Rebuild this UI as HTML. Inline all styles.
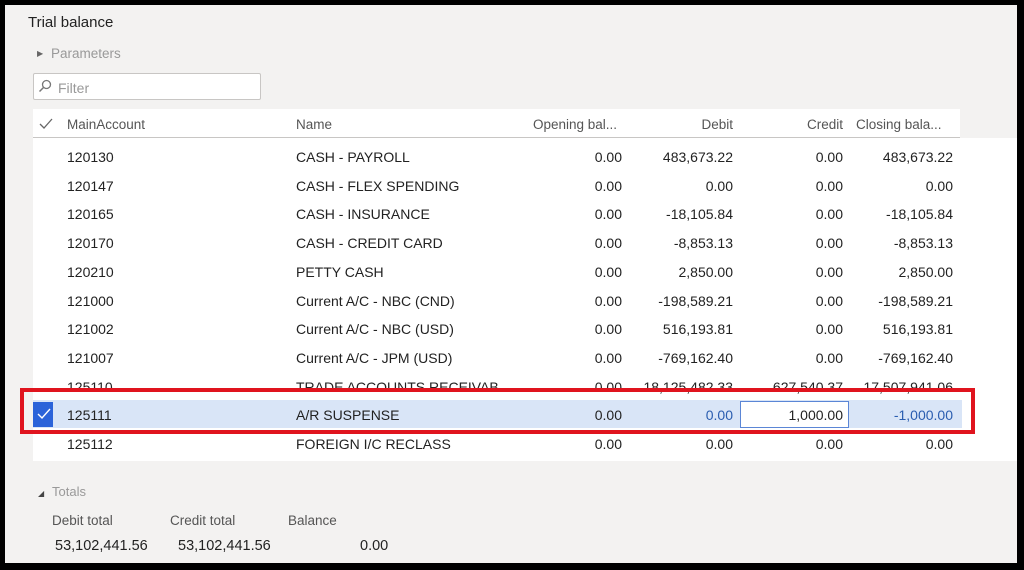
<!DOCTYPE html>
<html><head><style>
body{margin:0;width:1024px;height:570px;background:#000;position:relative;overflow:hidden;font-family:"Liberation Sans",sans-serif;font-size:14px;color:#222}
#pg{position:absolute;left:5px;top:5px;width:1012px;height:558px;background:#f3f2f1}
.a{position:absolute;white-space:nowrap}
.r{text-align:right}
#grid{position:absolute;left:33px;top:138px;width:984px;height:323px;background:#fff}
.hd{color:#555;font-size:13.5px}
</style></head><body>
<div id="pg"></div>
<div class="a" style="left:28px;top:14px;font-size:15px;color:#222">Trial balance</div>
<div class="a" style="left:37px;top:49px;font-size:8px;color:#666">&#9654;</div>
<div class="a" style="left:51px;top:46px;font-size:13.5px;color:#999">Parameters</div>
<div class="a" style="left:33px;top:73px;width:226px;height:25px;border:1px solid #c8c6c4;background:#fff;border-radius:2px"></div>
<svg class="a" style="left:38px;top:79px" width="14" height="14"><circle cx="8.5" cy="5.5" r="4" fill="none" stroke="#777" stroke-width="1.3"/><line x1="5.5" y1="8.5" x2="1.5" y2="12.5" stroke="#777" stroke-width="1.5"/></svg>
<div class="a" style="left:58px;top:80px;font-size:14px;color:#999">Filter</div>
<div class="a" style="left:33px;top:109px;width:927px;height:29px;background:#fff"></div>
<div id="grid"></div>
<div class="a" style="left:33px;top:137px;width:927px;height:1px;background:#c8c6c4"></div>
<svg class="a" style="left:39px;top:118px" width="14" height="12"><path d="M1 6 L5 10 L13 1" fill="none" stroke="#666" stroke-width="1.3"/></svg>
<div class="a hd" style="left:67px;top:117px">MainAccount</div>
<div class="a hd" style="left:296px;top:117px">Name</div>
<div class="a hd r" style="left:500px;width:117px;top:117px">Opening bal...</div>
<div class="a hd r" style="left:640px;width:93px;top:117px">Debit</div>
<div class="a hd r" style="left:750px;width:93px;top:117px">Credit</div>
<div class="a hd" style="left:856px;top:117px">Closing bala...</div>
<div class="a" style="left:33px;top:400px;width:929px;height:28px;background:#d9e5f7"></div>
<div class="a" style="left:33px;top:402px;width:20px;height:25px;background:#2b63d9"></div>
<svg class="a" style="left:37px;top:408px" width="14" height="12"><path d="M1 6 L5 10 L13 1" fill="none" stroke="#fff" stroke-width="1.4"/></svg>
<div class="a" style="left:740px;top:401px;width:107px;height:25px;border:1px solid #5b86d6;background:#fff"></div>
<div id="rows"></div>
<div class="a" style="left:20px;top:388px;width:947px;height:38px;border:4px solid #e0141e"></div>
<div class="a" style="left:38px;top:489px;font-size:8px;color:#444">&#9698;</div>
<div class="a" style="left:52px;top:484px;font-size:13px;color:#999">Totals</div>
<div class="a" style="left:52px;top:513px;font-size:13.5px;color:#555">Debit total</div>
<div class="a" style="left:170px;top:513px;font-size:13.5px;color:#555">Credit total</div>
<div class="a" style="left:288px;top:513px;font-size:13.5px;color:#555">Balance</div>
<div class="a" style="left:55px;top:538px;font-size:14.5px">53,102,441.56</div>
<div class="a" style="left:178px;top:538px;font-size:14.5px">53,102,441.56</div>
<div class="a" style="left:360px;top:538px;font-size:14.5px">0.00</div>
<script>
var d=[["120130","CASH - PAYROLL","0.00","483,673.22","0.00","483,673.22"],
["120147","CASH - FLEX SPENDING","0.00","0.00","0.00","0.00"],
["120165","CASH - INSURANCE","0.00","-18,105.84","0.00","-18,105.84"],
["120170","CASH - CREDIT CARD","0.00","-8,853.13","0.00","-8,853.13"],
["120210","PETTY CASH","0.00","2,850.00","0.00","2,850.00"],
["121000","Current A/C - NBC (CND)","0.00","-198,589.21","0.00","-198,589.21"],
["121002","Current A/C - NBC (USD)","0.00","516,193.81","0.00","516,193.81"],
["121007","Current A/C - JPM (USD)","0.00","-769,162.40","0.00","-769,162.40"],
["125110","TRADE ACCOUNTS RECEIVAB","0.00","18,125,482.33","627,540.37","17,507,941.06"],
["125111","A/R SUSPENSE","0.00","0.00","1,000.00","-1,000.00"],
["125112","FOREIGN I/C RECLASS","0.00","0.00","0.00","0.00"]];
var h="",rr=[622,733,843,953];
d.forEach(function(r,i){var y=149+i*28.7;
h+='<div class="a" style="left:67px;top:'+y+'px">'+r[0]+'</div><div class="a" style="left:296px;top:'+y+'px">'+r[1]+'</div>';
for(var k=0;k<4;k++){var col=(i==9&&k>0&&k!=2)?"#2a5db0":"#222";h+='<div class="a r" style="left:'+(rr[k]-160)+'px;width:160px;top:'+y+'px;color:'+col+'">'+r[k+2]+'</div>';}});
document.getElementById("rows").innerHTML=h;
</script>
</body></html>
